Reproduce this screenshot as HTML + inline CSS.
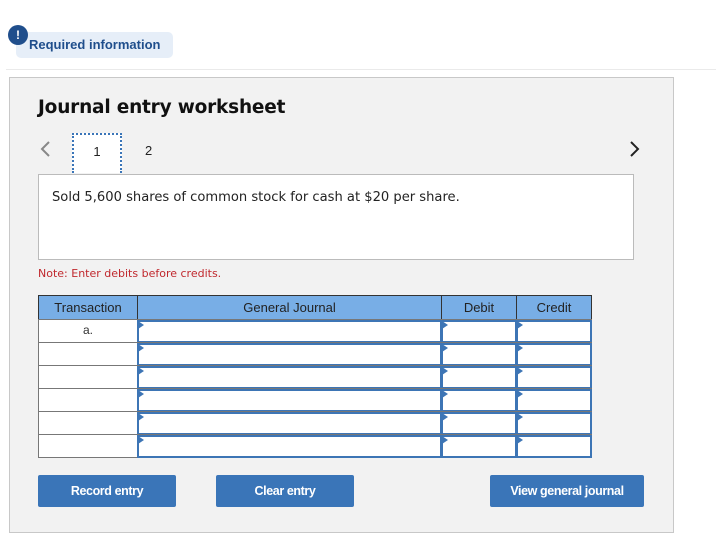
<!DOCTYPE html><html><head><style>
body{margin:0;width:716px;height:542px;background:#fff;font-family:"Liberation Sans",sans-serif;position:relative;overflow:hidden}
.a{position:absolute}
.btn{position:absolute;top:475px;height:32px;background:#3a75b8;border-radius:2px;color:#fff;font:bold 12.5px "Liberation Sans Narrow","Liberation Sans",sans-serif;letter-spacing:-0.4px;text-align:center;line-height:32px}
.c{position:absolute;background:#fff;border:1px solid #777;box-sizing:border-box}
.in{position:absolute;border:2px solid #3d75b5;box-sizing:border-box;background:#fff}
.tri{position:absolute;width:0;height:0;border-top:4px solid transparent;border-bottom:4px solid transparent;border-left:6px solid #3d75b5}
.h{position:absolute;top:295px;height:25px;background:#78aee6;border:1px solid #333;box-sizing:border-box;font-size:13px;color:#222;text-align:center;line-height:23px}
</style></head><body>
<div class="a" style="left:16px;top:32px;width:157px;height:26px;background:#e6eef8;border-radius:5px"></div>
<div class="a" style="left:8px;top:25px;width:20px;height:20px;border-radius:50%;background:#1f4e8c;color:#fff;font:bold 12px 'Liberation Sans';text-align:center;line-height:20px">!</div>
<div class="a" style="left:29px;top:37px;font-size:13px;color:#1f4e8c;font-weight:600">Required information</div>
<div class="a" style="left:6px;top:69px;width:710px;height:1px;background:#eaeaea"></div>
<div class="a" style="left:9px;top:77px;width:663px;height:454px;background:#f2f2f2;border:1px solid #c8c8c8"></div>
<div class="a" style="left:38px;top:97px;font:bold 18.5px 'DejaVu Sans',sans-serif;color:#111;letter-spacing:-0.2px">Journal entry worksheet</div>
<svg class="a" style="left:38px;top:140px" width="14" height="18"><path d="M11 2L4 9l7 7" stroke="#888" stroke-width="2" fill="none"/></svg>
<div class="a" style="left:72px;top:133px;width:50px;height:40px;background:#fff;border:2px dotted #3a75b8;border-bottom:none;box-sizing:border-box;text-align:center;font-size:13px;line-height:34px;color:#222">1</div>
<div class="a" style="left:145px;top:143px;font-size:13px;color:#222">2</div>
<svg class="a" style="left:628px;top:140px" width="14" height="18"><path d="M3 2l7 7-7 7" stroke="#222" stroke-width="2" fill="none"/></svg>
<div class="a" style="left:38px;top:174px;width:594px;height:84px;background:#fff;border:1px solid #bbb"></div>
<div class="a" style="left:52px;top:190px;font:13.1px 'DejaVu Sans',sans-serif;color:#222;letter-spacing:0">Sold 5,600 shares of common stock for cash at $20 per share.</div>
<div class="a" style="left:38px;top:267px;font:11px 'DejaVu Sans',sans-serif;color:#c0282d">Note: Enter debits before credits.</div>
<div class="h" style="left:38px;width:100px">Transaction</div>
<div class="h" style="left:137px;width:305px">General Journal</div>
<div class="h" style="left:441px;width:76px">Debit</div>
<div class="h" style="left:516px;width:76px">Credit</div>
<div id="rows"></div>
<script>
var h='';for(var i=0;i<6;i++){var y=319+i*23;
h+='<div class="c" style="left:38px;top:'+y+'px;width:100px;height:24px;text-align:center;font-size:12px;line-height:20px;color:#333">'+(i==0?'a.':'')+'</div>';
h+='<div class="c" style="left:137px;top:'+y+'px;width:455px;height:24px"></div>';
[[137,305],[441,76],[516,76]].forEach(function(c){h+='<div class="in" style="left:'+c[0]+'px;top:'+(y+1)+'px;width:'+c[1]+'px;height:23px"></div><div class="tri" style="left:'+(c[0]+1)+'px;top:'+(y+2)+'px"></div>';});}
document.getElementById('rows').innerHTML=h;
</script>
<div class="btn" style="left:38px;width:138px">Record entry</div>
<div class="btn" style="left:216px;width:138px">Clear entry</div>
<div class="btn" style="left:490px;width:154px">View general journal</div>
</body></html>
